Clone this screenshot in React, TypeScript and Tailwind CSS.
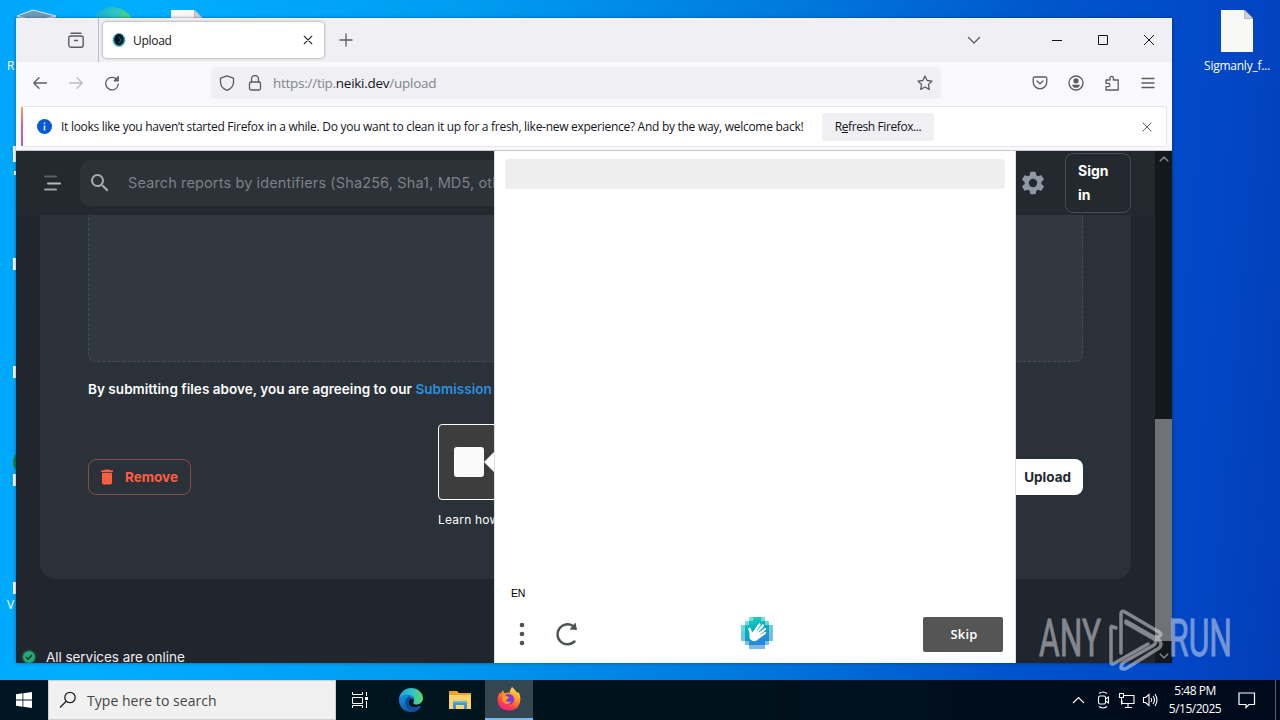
import type { ReactNode } from "react";

function Stroke({ size = 16, width = 1.3, className = "", children }: { size?: number; width?: number; className?: string; children: ReactNode }) {
  return (
    <svg
      width={size}
      height={size}
      viewBox="0 0 16 16"
      fill="none"
      stroke="currentColor"
      strokeWidth={width}
      strokeLinecap="round"
      strokeLinejoin="round"
      className={`shrink-0 ${className}`}
    >
      {children}
    </svg>
  );
}

function FileIcon() {
  return (
    <svg width="32" height="42" viewBox="0 0 32 42">
      <path d="M0 0H23.500L32 8.500V42H0Z" fill="#f8f8f6" />
      <path d="M23.500 0V8.500H32Z" fill="#cfd2d4" stroke="#9a9ea2" strokeWidth="0.600" />
    </svg>
  );
}

function DesktopIcons() {
  return (
    <>
      <svg className="absolute left-[16px] top-[9px]" width="42" height="20" viewBox="0 0 42 20">
        <path d="M1 7L17 1L40 7V20H1Z" fill="#8fb9cf" />
        <path d="M1 7L17 1L40 7L20 12Z" fill="#6e9bb5" stroke="#d5e8f2" strokeWidth="1" />
      </svg>
      <svg className="absolute left-[90px] top-[6px]" width="46" height="20" viewBox="0 0 46 20">
        <defs>
          <linearGradient id="edgeTop">
            <stop offset="0" stopColor="#16a9d8" />
            <stop offset="0.600" stopColor="#2cc6c4" />
            <stop offset="1" stopColor="#62d84e" />
          </linearGradient>
        </defs>
        <circle cx="22.500" cy="23" r="22" fill="url(#edgeTop)" />
      </svg>
      <div className="absolute left-[171px] top-[10px]">
        <FileIcon />
      </div>
      <span className="absolute left-[7px] top-[58px] text-[12px] leading-4 text-white">R</span>
      <span className="absolute left-[7px] top-[597px] text-[12px] leading-4 text-white">V</span>
      <div className="absolute left-[13px] top-[146px] h-4 w-3 bg-white" />
      <div className="absolute left-[14px] top-[171px] h-1 w-2 bg-white" />
      <div className="absolute left-[13px] top-[258px] h-3 w-3 bg-white" />
      <div className="absolute left-[13px] top-[366px] h-3 w-3 bg-white" />
      <div className="absolute left-[13px] top-[450px] h-6 w-6 rounded-full bg-[#16833c]" />
      <div className="absolute left-[13px] top-[474px] h-3 w-3 bg-white" />
      <div className="absolute left-[13px] top-[582px] h-3 w-3 bg-white" />
      <div className="absolute left-[1198px] top-[10px] flex w-[78px] flex-col items-center">
        <FileIcon />
        <span className="mt-[6px] text-[12px] leading-4 tracking-[-0.25px] text-white">Sigmanly_f...</span>
      </div>
    </>
  );
}

function TabBar() {
  return (
    <div className="flex h-[44px] items-center bg-[#f0f0f4] text-[#5b5b66]">
      <div className="flex h-full w-[83px] items-center justify-end border-r border-[#bcbcc4] pr-[14px]">
        <svg width="16" height="16" viewBox="0 0 16 16" fill="none" stroke="currentColor" strokeWidth="1.400" strokeLinecap="round">
          <path d="M3 1.200h10" />
          <rect x="0.800" y="4" width="14.400" height="11.200" rx="2" />
          <path d="M6.500 8.500h3" />
        </svg>
      </div>
      <div className="ml-[4px] flex h-[36px] w-[221px] items-center rounded-[4px] bg-white pl-[9px] pr-[10px] shadow-[0_0_3px_rgba(0,0,0,0.45)]">
        <svg width="14" height="14" viewBox="0 0 14 14">
          <ellipse cx="7" cy="7" rx="6" ry="6.500" fill="#2398a5" strokeDasharray="1 1" stroke="#2398a5" />
          <ellipse cx="7" cy="6.500" rx="4.600" ry="5.800" fill="#061522" />
          <path d="M7 4l2 3-2 3" stroke="#186c87" fill="none" />
        </svg>
        <span className="ml-[7px] flex-1 pt-[2px] text-[12px] tracking-[-0.3px] text-[#15141a]">Upload</span>
        <Stroke size={12} width={1.5} className="text-[#333]">
          <path d="M3 3l10 10M13 3L3 13" />
        </Stroke>
      </div>
      <Stroke size={16} width={1.3} className="ml-[14px]">
        <path d="M8 2v12M2 8h12" />
      </Stroke>
      <div className="flex-1" />
      <Stroke size={16}>
        <path d="M2.500 5.500L8 11l5.500-5.500" />
      </Stroke>
      <svg width="190" height="44" viewBox="0 0 190 44" fill="none" stroke="#15141a">
        <path d="M70 22.500h10M116.500 17.500h9v9h-9zM162 17l10 10M172 17l-10 10" />
      </svg>
    </div>
  );
}

function NavBar() {
  return (
    <div className="flex h-[43px] items-center bg-[#f9f9fb] pb-[2px] text-[#5b5b66]">
      <Stroke className="ml-[16px]">
        <path d="M14.500 8H1.800M7 2.800L1.800 8L7 13.200" />
      </Stroke>
      <Stroke className="ml-[20px] text-[#bdbdc4]">
        <path d="M1.500 8h12.700M9 2.800L14.200 8L9 13.200" />
      </Stroke>
      <Stroke className="ml-[20px]">
        <path d="M13.500 5.500A6.300 6.300 0 1 0 14.300 9M14.300 1.800v4h-4z" />
      </Stroke>
      <div className="ml-[91px] flex h-[32px] w-[730px] items-center rounded-[4px] bg-[#f0f0f4] pl-[8px] pr-[8px]">
        <Stroke>
          <path d="M8 0.800L14.500 3.200V7C14.500 11 11.500 14 8 15.300C4.500 14 1.500 11 1.500 7V3.200Z" />
        </Stroke>
        <Stroke className="ml-[12px]">
          <rect x="2.500" y="7" width="11" height="8" rx="1.500" />
          <path d="M4.500 7V4a3.500 3.500 0 0 1 7 0V7" />
        </Stroke>
        <span className="ml-[10px] flex-1 pt-[2px] text-[13.500px] tracking-[-0.27px] text-[#83838c]">
          https://tip.<span className="text-[#15141a]">neiki.dev</span>/upload
        </span>
        <Stroke>
          <path d="M8 1l2.100 4.500 4.900.6-3.600 3.400.9 4.900L8 12l-4.300 2.400.9-4.900L1 6.100l4.900-.6z" />
        </Stroke>
      </div>
      <div className="ml-[91px] flex items-center gap-[20px]">
        <Stroke>
          <path d="M2.500 2h11a1.300 1.300 0 0 1 1.300 1.300V7a6.800 6.800 0 0 1-13.600 0V3.300A1.300 1.300 0 0 1 2.500 2zM5 6l3 2.800L11 6" />
        </Stroke>
        <Stroke>
          <circle cx="8" cy="8" r="7" />
          <circle cx="8" cy="5.800" r="2" fill="currentColor" />
          <path d="M4.200 9.700h7.600c0 2-1.700 3.100-3.800 3.100s-3.800-1.100-3.800-3.100z" fill="currentColor" stroke="none" />
        </Stroke>
        <Stroke>
          <path d="M2 5h4V3a1.700 1.700 0 0 1 3.400 0v2h4.800v10H2v-3.400h2.300a1.600 1.600 0 0 0 0-3.200H2z" />
        </Stroke>
        <Stroke>
          <path d="M2 3.500h12M2 8h12M2 12.500h12" />
        </Stroke>
      </div>
    </div>
  );
}

function NotificationBar() {
  return (
    <div className="h-[46px] border-b border-[#c5c7ca] bg-[#f9f9fb] px-[5px] pt-[1px]">
      <div className="flex h-[41px] items-center rounded-[3px] border border-[#e6e6ea] border-l-0 bg-white pr-[13px]">
        <div className="h-full w-[2px] bg-linear-to-b from-[#f3a15c] via-[#e0588f] to-[#9a59e0]" />
        <svg width="15" height="15" viewBox="0 0 15 15" className="ml-[14px]">
          <circle cx="7.500" cy="7.500" r="7.500" fill="#0359d8" />
          <path d="M7.500 6.500v5M7.500 3.500v1.500" stroke="white" strokeWidth="1.500" />
        </svg>
        <span className="ml-[9px] w-[742px] whitespace-nowrap text-[12px] tracking-[-0.28px] text-[#15141a]">
          It looks like you haven’t started Firefox in a while. Do you want to clean it up for a fresh, like-new experience? And by the way, welcome back!
        </span>
        <button className="ml-[19px] h-[28px] w-[112px] rounded-[4px] bg-[#f0f0f4] text-[12px] tracking-[-0.4px] text-[#15141a]">
          R<span className="underline">e</span>fresh Firefox...
        </button>
        <div className="flex-1" />
        <Stroke size={12} width={1.3} className="text-[#5b5b66]">
          <path d="M2.500 2.500l11 11M13.500 2.500l-11 11" />
        </Stroke>
      </div>
    </div>
  );
}

function PageHeader() {
  return (
    <header className="flex h-[64px] shrink-0 items-center bg-[#23292e] pr-[24px]">
      <svg width="18" height="18" viewBox="0 0 18 18" className="ml-[27px] shrink-0" strokeWidth="2" strokeLinecap="round">
        <path d="M2 2.500h11" stroke="#596067" />
        <path d="M5 9.500h12" stroke="#b6babf" />
        <path d="M2 15.500h11" stroke="#9fa4a9" />
      </svg>
      <div className="ml-[19px] flex h-[46px] flex-1 items-center rounded-[10px] bg-[#2d3238]">
        <svg width="24" height="24" viewBox="0 0 24 24" className="ml-[8px]" fill="#a9adb2">
          <path d="M15.500 14h-.79l-.28-.27A6.470 6.470 0 0 0 16 9.500 6.500 6.500 0 1 0 9.500 16c1.610 0 3.090-.59 4.230-1.570l.27.28v.79l5 4.990L20.490 19zm-6 0C7.010 14 5 11.990 5 9.500S7.010 5 9.500 5 14 7.010 14 9.500 11.990 14 9.500 14" />
        </svg>
        <span className="ml-[16px] whitespace-nowrap text-[14.500px] tracking-[0.13px] text-[#7a8087]">
          Search reports by identifiers (Sha256, Sha1, MD5, other)
        </span>
      </div>
      <svg width="28" height="28" viewBox="0 0 24 24" className="ml-[23px] shrink-0" fill="#8f99a3">
        <path d="M19.140 12.940c.04-.3.06-.61.06-.94s-.02-.64-.07-.94l2.030-1.580c.18-.14.23-.41.120-.61l-1.920-3.320c-.12-.22-.37-.29-.59-.22l-2.390.96c-.5-.38-1.030-.7-1.620-.94L14.400 2.810c-.04-.24-.24-.41-.48-.41h-3.840c-.24 0-.43.17-.47.41L9.250 5.350c-.59.24-1.130.57-1.620.94L5.240 5.330c-.22-.08-.47 0-.59.22L2.740 8.870c-.12.21-.08.47.12.61l2.030 1.580c-.05.3-.09.63-.09.94s.02.64.07.94l-2.030 1.580c-.18.14-.23.41-.12.61l1.920 3.320c.12.22.37.29.59.22l2.390-.96c.5.38 1.030.7 1.620.94l.36 2.540c.05.24.24.41.48.41h3.840c.24 0 .44-.17.47-.41l.36-2.540c.59-.24 1.130-.56 1.620-.94l2.390.96c.22.08.47 0 .59-.22l1.920-3.320c.12-.22.07-.47-.12-.61zM12 15.600A3.600 3.600 0 1 1 12 8.400a3.600 3.600 0 0 1 0 7.200" />
      </svg>
      <div className="ml-[18px] flex h-[60px] w-[66px] shrink-0 items-center rounded-[8px] border border-[#454d54] px-3 text-[14px] leading-6 font-bold text-white">
        Sign in
      </div>
    </header>
  );
}

function UploadPage() {
  return (
    <main className="flex min-w-0 flex-1 flex-col overflow-hidden bg-[#21262e] font-['Inter',sans-serif]">
      <PageHeader />
      <section className="mr-[24px] ml-[24px] h-[364px] shrink-0 rounded-b-[16px] bg-[#2a3138] px-[48px]">
        <div className="h-[147px] rounded-b-[8px] border border-t-0 border-dashed border-[#444c53] bg-[#323840]" />
        <p className="mt-[16px] text-[13.500px] leading-[22px] font-semibold tracking-[0.04px] whitespace-nowrap text-white">
          By submitting files above, you are agreeing to our <span className="text-[#2b90df]">Submission Terms</span>
        </p>
        <div className="mt-[24px] flex items-end">
          <button className="mb-[5px] flex h-[36px] w-[103px] items-center rounded-[8px] border border-[#8a4d45] pl-[8px] text-[13.500px] font-bold text-[#ff5d40]">
            <svg width="20" height="20" viewBox="0 0 24 24" fill="currentColor">
              <path d="M6 19c0 1.100.9 2 2 2h8c1.100 0 2-.9 2-2V7H6zM19 4h-3.500l-1-1h-5l-1 1H5v2h14z" />
            </svg>
            <span className="ml-[8px]">Remove</span>
          </button>
          <div className="ml-[247px] flex h-[76px] w-[300px] items-center rounded-[4px] border border-white bg-[#3d3d3d] pl-[15px]">
            <div className="h-[30px] w-[30px] rounded-[3px] bg-[#fafafa]" />
          </div>
          <button className="mb-[5px] ml-auto h-[36px] w-[92px] rounded-[8px] bg-white pr-[12px] text-right text-[13.500px] font-bold text-[#21272e]">
            Upload
          </button>
        </div>
        <p className="mt-[12px] ml-[350px] text-[12px] leading-4 tracking-[0.2px] text-white">Learn how hCaptcha works</p>
      </section>
      <footer className="mt-[70px] flex shrink-0 items-center">
        <svg width="16" height="16" viewBox="0 0 16 16" className="ml-[5px]">
          <circle cx="8" cy="8" r="7.500" fill="#174b3e" />
          <circle cx="8" cy="8" r="6" fill="#26a875" />
          <path d="M5 8l2.200 2.200L11 6" fill="none" stroke="#17382f" strokeWidth="1.500" />
        </svg>
        <span className="ml-[9px] text-[13.500px] leading-[14px] tracking-[-0.05px] text-[#eeeeee]">All services are online</span>
      </footer>
    </main>
  );
}

function Scrollbar() {
  return (
    <div className="flex w-[17px] flex-col items-center bg-[#13181d] pt-[3px] text-[#7c7c82]">
      <Stroke size={10} width={2.4}>
        <path d="M2 11l6-6 6 6" />
      </Stroke>
      <div className="mt-[255px] h-[222px] w-full bg-[#707278]" />
      <Stroke size={10} width={2.4} className="mt-[10px]">
        <path d="M2 5l6 6 6-6" />
      </Stroke>
    </div>
  );
}

function HandLogo() {
  return (
    <svg width="32" height="32" viewBox="0 0 32 32">
      <defs>
        <linearGradient id="hand" x1="0" y1="0" x2="0.300" y2="1">
          <stop offset="0" stopColor="#25d6c1" />
          <stop offset="0.500" stopColor="#08adc0" />
          <stop offset="1" stopColor="#2688d8" />
        </linearGradient>
      </defs>
      <path d="M8 0H24V4H28V8H32V24H28V28H24V32H8V28H4V24H0V8H4V4H8Z" fill="url(#hand)" opacity="0.600" />
      <path d="M12 0H20V4H24V8H28V24H24V28H8V24H4V8H8V4H12Z" fill="url(#hand)" />
      <g stroke="#fff" strokeLinecap="round">
        <path d="M11 18L18.500 7.500M13.500 18L22 8.500M15.500 19L24 12M17 21L24 16" strokeWidth="2.200" />
        <path d="M10.500 17L8.500 12" strokeWidth="2.500" />
      </g>
      <path d="M8.500 13L11 16L14 13L20 16L18 21C15 25.500 10.500 25 8.500 21Z" fill="#fff" />
    </svg>
  );
}

function Challenge() {
  return (
    <div className="absolute top-0 left-[478px] flex h-[512px] w-[522px] flex-col border-x border-[#dedede] bg-white px-[10px] pt-[8px] font-['Open_Sans',sans-serif]">
      <div className="h-[30px] rounded-[4px] bg-[#eeeeee]" />
      <div className="flex-1" />
      <span className="ml-[6px] font-['Liberation_Sans',sans-serif] text-[10.500px] leading-4 tracking-[-0.3px] text-black">EN</span>
      <div className="mt-[15px] mb-[11px] flex h-[36px] items-center">
        <svg width="6" height="24" viewBox="0 0 6 24" fill="#4b5453" className="ml-[14px]">
          <circle cx="3" cy="3" r="2.300" />
          <circle cx="3" cy="12" r="2.300" />
          <circle cx="3" cy="21" r="2.300" />
        </svg>
        <svg width="24" height="26" viewBox="0 0 24 26" className="ml-[30px]">
          <path d="M18 5A10 10 0 1 0 19.500 20.500" fill="none" stroke="#4b5453" strokeWidth="2.500" strokeLinecap="round" />
          <path d="M20.500 1.500L22 9L14.500 8.500Z" fill="#4b5453" />
        </svg>
        <div className="mb-[2px] ml-[162px]">
          <HandLogo />
        </div>
        <div className="flex-1" />
        <button className="mr-[2px] h-[35px] w-[80px] rounded-[2px] bg-[#555555] pt-[2px] pl-[2px] text-[13px] font-semibold tracking-[0.2px] text-white">
          Skip
        </button>
      </div>
    </div>
  );
}

function BrowserWindow() {
  return (
    <div className="absolute top-[18px] left-[16px] flex h-[645px] w-[1156px] flex-col shadow-[0_0_3px_rgba(0,20,60,0.5)]">
      <TabBar />
      <NavBar />
      <NotificationBar />
      <div className="relative flex h-[512px] overflow-hidden">
        <UploadPage />
        <Scrollbar />
        {/* arrow joining the challenge popup to the checkbox */}
        <svg className="absolute top-[300px] left-[468px]" width="11" height="22" viewBox="0 0 11 22">
          <path d="M11 0L0 11L11 22Z" fill="#fff" />
        </svg>
        <Challenge />
      </div>
    </div>
  );
}

function Watermark() {
  return (
    <div className="absolute top-[608px] left-[1038px] h-[66px] w-[200px] opacity-50">
      <svg width="200" height="66" viewBox="0 0 200 66" fill="none">
        <g stroke="#e6e8ec" strokeWidth="3.500" strokeLinejoin="round" strokeLinecap="round">
          <path d="M78 20L74 18.500Q73 18 73 20V54Q73 57 76 55.500L110 36" />
          <path d="M83 45V6Q83 2 87 4L121 24Q125 27 120 29L117 29" />
          <path d="M88 15L116 31Q120 34 116 37L86 54Q83 56 83 60Q85 62 89 60L121 40Q125 36 121 32L88 13Z" />
        </g>
        <g fill="#e6e8ec" stroke="#e6e8ec" strokeWidth="0.800" fontFamily="Roboto, sans-serif" fontSize="52">
          <text x="1" y="47.500" textLength="62" lengthAdjust="spacingAndGlyphs">ANY</text>
          <text x="131" y="47.500" textLength="63" lengthAdjust="spacingAndGlyphs">RUN</text>
        </g>
      </svg>
    </div>
  );
}

function EdgeIcon() {
  return (
    <svg width="24" height="24" viewBox="0 0 24 24">
      <defs>
        <linearGradient id="edgeWave" x1="0" x2="1">
          <stop offset="0" stopColor="#1ba4e0" />
          <stop offset="0.600" stopColor="#35c5c8" />
          <stop offset="1" stopColor="#64d851" />
        </linearGradient>
        <linearGradient id="edgeBody" x1="0" y1="0" x2="0.500" y2="1">
          <stop offset="0" stopColor="#1595df" />
          <stop offset="1" stopColor="#1157a9" />
        </linearGradient>
      </defs>
      <path d="M0 11C1 4 6 0 12 0C19 0 24 5 24 10C24 14 21 16.500 17.500 16.500C14 16.500 14 15 15 13C16 9 12 7 8.500 7C4 7 1 9 0 13Z" fill="url(#edgeWave)" />
      <path d="M0 12C1 8 5 6.500 8.500 6.500C12 6.500 15.500 9 15 12C14 10 10 10 9.500 14C9.500 19 15 21 22 17.500C20 21.500 16 24 12 24C5 24 0 19 0 12Z" fill="url(#edgeBody)" />
      <path d="M9 9C5 12 5 20 13 24C18 24 21 20.500 22 17.500C15 21 9.500 19 9.500 14C9.500 12 11 10.500 12.500 10.500C12 9 10 8.500 9 9Z" fill="#0f4d9a" />
    </svg>
  );
}

function FolderIcon() {
  return (
    <svg width="22" height="19" viewBox="0 0 22 19">
      <path d="M0 0H8L10 2H22V18H0Z" fill="#e9a51d" />
      <path d="M0 4H22V18H0Z" fill="#fcd364" />
      <path d="M4 10H18V18H15V14H7V18H4Z" fill="#3b97d5" />
      <path d="M4 10H18V12H4Z" fill="#65b5e2" />
    </svg>
  );
}

function FirefoxIcon() {
  return (
    <svg width="24" height="24" viewBox="0 0 24 24">
      <defs>
        <linearGradient id="fox" x1="0.800" y1="0" x2="0.250" y2="1">
          <stop offset="0" stopColor="#ffe84a" />
          <stop offset="0.450" stopColor="#ff8a24" />
          <stop offset="0.750" stopColor="#ff3b4e" />
          <stop offset="1" stopColor="#e61e8c" />
        </linearGradient>
      </defs>
      <path d="M15 0C18 2 19 5 21 6L21.500 5C23 8 24 11 23 15C22 20 18 23.500 12 23.500C5 23.500 0 19 0.500 12C1 8 2 7 3 5L3.500 7L6 3L7 6H9C10 6 12 5 13 6C12 4 14 2 15 0Z" fill="url(#fox)" />
      <path d="M8 8C11 6 16 7 17 11C18 15 15 17.500 12 17.500C9 17.500 7 15.500 7.500 13L11 11.500C11 10 9 10 8 8Z" fill="#8038d9" />
      <path d="M5 8C6 7 8 7 9 9L12 10C12 11.500 10 12 9 13C9 15 12 15.500 14 14C14 17 8 19 5.500 14Z" fill="#ff9927" />
    </svg>
  );
}

function Taskbar() {
  return (
    <div className="flex h-[40px] items-center bg-linear-to-r from-[#001721] via-[#00131d] to-[#000a1c] text-white">
      <div className="flex w-[48px] justify-center">
        <svg width="16" height="16" viewBox="0 0 16 16" fill="white">
          <path d="M0 2.300L6.500 1.300V7.500H0ZM7.300 1.200L16 0V7.500H7.300ZM0 8.500H6.500V14.700L0 13.700ZM7.300 8.500H16V16L7.300 14.800Z" />
        </svg>
      </div>
      <div className="flex h-full w-[288px] items-center border border-[#cfcfcf] bg-[#f1f1f1] pl-[10px] text-[#333]">
        <svg width="18" height="18" viewBox="0 0 18 18" fill="none" stroke="#222" strokeWidth="1.300">
          <circle cx="11" cy="6.500" r="5.200" />
          <path d="M7.200 10.300L1 16.500" />
        </svg>
        <span className="ml-[10px] text-[14px] tracking-[0.04px] text-[#444]">Type here to search</span>
      </div>
      <div className="flex w-[48px] justify-center">
        <svg width="16" height="16" viewBox="0 0 16 16" fill="none" stroke="white">
          <path d="M0.500 0v2.500h10V0M0.500 5.500h10v6h-10zM0.500 16v-2.500h10V16M14.500 0v4M14.500 9v7" />
          <path d="M13 5h3v3h-3z" fill="white" stroke="none" />
        </svg>
      </div>
      <div className="flex w-[53px] justify-center">
        <EdgeIcon />
      </div>
      <div className="flex w-[48px] justify-center pr-[2px]">
        <FolderIcon />
      </div>
      <div className="flex h-full w-[48px] items-center justify-center border-b-2 border-[#76b9ed] bg-[#344650]">
        <FirefoxIcon />
      </div>
      <div className="flex-1" />
      <svg width="88" height="20" viewBox="0 0 88 20" fill="none" stroke="white" strokeWidth="1.100">
        <path d="M1 13l5.500-5.500L12 13" />
        <rect x="26.500" y="6" width="7" height="8" rx="1.500" />
        <path d="M33.500 9l3-2v6l-3-2M27 3.500q4-3 8 0M27 16.500q4 3 8 0" />
        <path d="M52 5.500h10v8h-12v-3M56 13.500v4M53 17.500h7M47.500 3.500h4v4h-4zM49.500 7.500v7" />
        <path d="M71.500 7.500h2l3.500-3v11l-3.500-3h-2zM79 8q1.500 2 0 4M81 6q3 4 0 8" />
        <path d="M83 4q4 6 0 12" />
      </svg>
      <div className="ml-[5px] w-[60px] text-center text-[12px] leading-[18px] tracking-[-0.5px] whitespace-nowrap">
        <div>5:48 PM</div>
        <div>5/15/2025</div>
      </div>
      <svg width="18" height="18" viewBox="0 0 18 18" fill="none" stroke="white" strokeWidth="1.200" className="ml-[13px]">
        <path d="M1 2h15.500v11.500H11L8 16.500V13.500H1Z" />
      </svg>
      <div className="ml-[19px] mr-[4px] h-full border-l border-[#58616b]" />
    </div>
  );
}

export default function App() {
  return (
    <div className="flex h-[720px] w-[1280px] flex-col overflow-hidden font-['Open_Sans','Noto_Sans',sans-serif]">
      <div className="relative flex-1 overflow-hidden bg-[linear-gradient(95deg,#00a6fa_0%,#00aeff_10%,#009cf2_35%,#0078dc_60%,#0056cc_78%,#0247c6_92%,#033db6_100%)]">
        <DesktopIcons />
        <BrowserWindow />
      </div>
      <Taskbar />
      <Watermark />
    </div>
  );
}
